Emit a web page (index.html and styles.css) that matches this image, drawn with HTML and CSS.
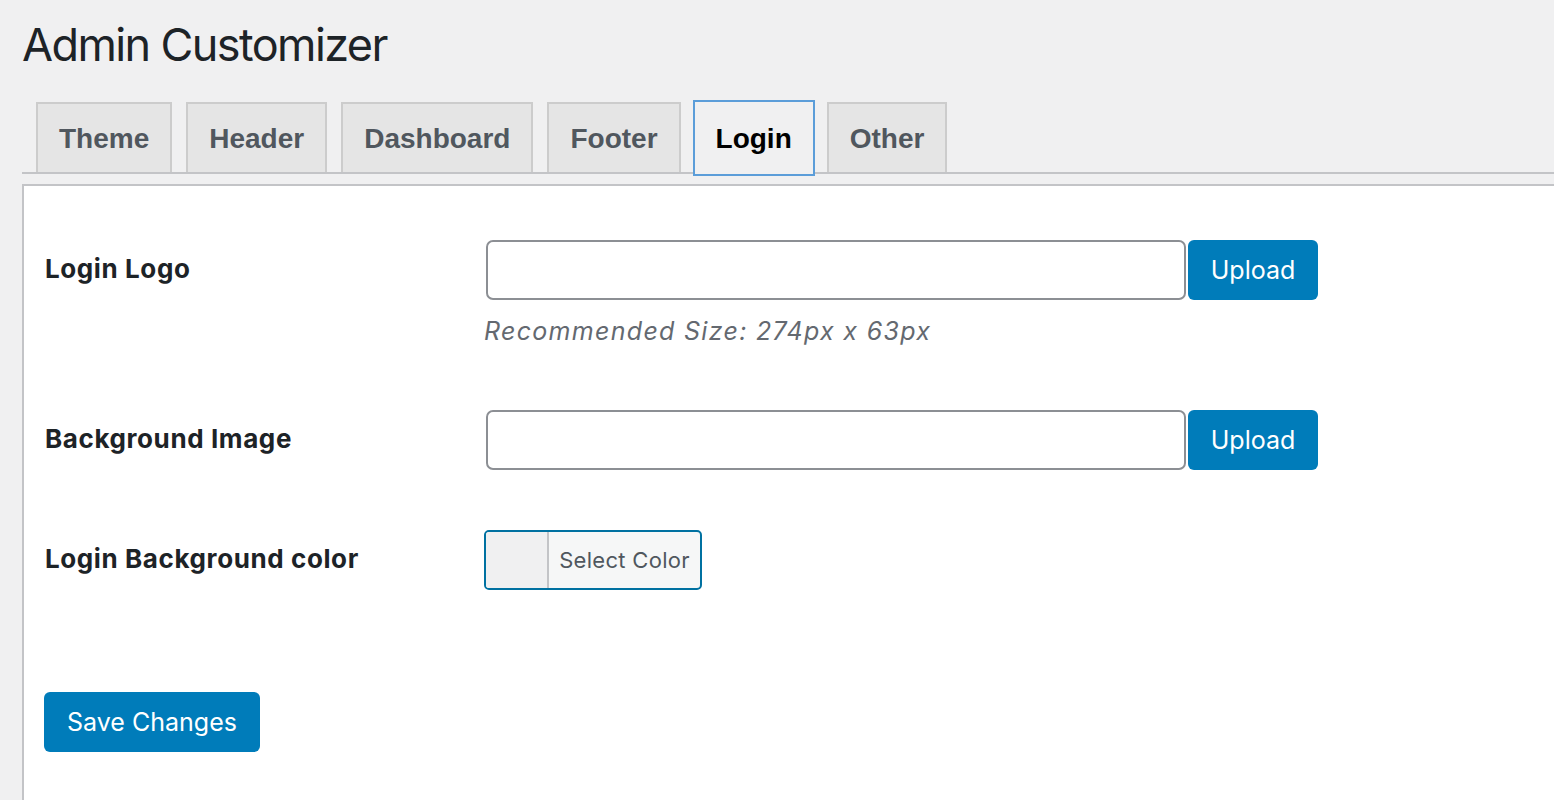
FILE: index.html
```html
<!DOCTYPE html>
<html>
<head>
<meta charset="utf-8">
<link rel="stylesheet" href="styles.css">
</head>
<body>
<div class="wrap">
  <h1 class="title">Admin Customizer</h1>
  <nav class="tabs">
    <a class="tab">Theme</a>
    <a class="tab">Header</a>
    <a class="tab">Dashboard</a>
    <a class="tab">Footer</a>
    <a class="tab active">Login</a>
    <a class="tab">Other</a>
  </nav>
  <div class="panel">
    <div class="row row-logo">
      <div class="label">Login Logo</div>
      <div class="field">
        <div class="upload">
          <input class="text" type="text">
          <button class="btn">Upload</button>
        </div>
        <p class="desc">Recommended Size: 274px x 63px</p>
      </div>
    </div>
    <div class="row row-bg">
      <div class="label">Background Image</div>
      <div class="field">
        <div class="upload">
          <input class="text" type="text">
          <button class="btn">Upload</button>
        </div>
      </div>
    </div>
    <div class="row row-color">
      <div class="label">Login Background color</div>
      <div class="field">
        <button class="color-btn"><span class="swatch"></span><span class="color-text">Select Color</span></button>
      </div>
    </div>
    <div class="submit">
      <button class="btn save">Save Changes</button>
    </div>
  </div>
</div>
</body>
</html>
```
FILE: styles.css
```css
html, body {
  margin: 0;
  padding: 0;
  background: #f0f0f1;
  font-family: Inter, "Noto Sans", sans-serif;
  color: #1d2327;
}
.wrap {
  padding-left: 22px;
  padding-top: 14px;
}
.title {
  margin: 0;
  font-size: 45px;
  font-weight: 400;
  line-height: 62px;
  letter-spacing: -1.6px;
  color: #1d2327;
}
.tabs {
  display: flex;
  align-items: flex-end;
  margin-top: 26px;
  height: 70px;
  border-bottom: 2px solid #c3c4c7;
}
.tab {
  box-sizing: border-box;
  height: 70px;
  margin-left: 14px;
  padding: 0 21px;
  background: #e5e5e5;
  border: 2px solid #cccccc;
  border-bottom: none;
  font-family: "Liberation Sans", Arial, sans-serif;
  font-weight: 700;
  font-size: 28px;
  line-height: 70px;
  color: #50575e;
  display: block;
}
.tab.active {
  height: 76px;
  margin-bottom: -4px;
  margin-left: 12px;
  border: 2px solid #5b9dd9;
  background: #f0f0f1;
  color: #000;
  line-height: 74px;
  padding: 0 21px;
}
.tab.active + .tab {
  margin-left: 12px;
}
.panel {
  margin-top: 10px;
  background: #fff;
  border-top: 2px solid #c3c4c7;
  border-left: 2px solid #c3c4c7;
  padding: 54px 21px 48px 20px;
}
.row {
  display: flex;
  align-items: flex-start;
}
.label {
  width: 440px;
  flex: none;
  padding-left: 1px;
  box-sizing: border-box;
  font-weight: 700;
  font-size: 26px;
  letter-spacing: 0.6px;
  line-height: 58px;
  color: #1d2327;
}
.field {
  flex: none;
}
.upload {
  display: flex;
  gap: 2px;
  padding-left: 2px;
}
.text {
  box-sizing: border-box;
  width: 700px;
  height: 60px;
  border: 2px solid #8c8f94;
  border-radius: 7px;
  background: #fff;
  margin: 0;
}
.btn {
  box-sizing: border-box;
  height: 60px;
  padding: 0 22px;
  border: none;
  border-radius: 6px;
  background: #007cba;
  color: #fff;
  font-family: Inter, "Noto Sans", sans-serif;
  font-size: 25px;
  margin: 0;
}
.upload .btn {
  width: 130px;
}
.desc {
  margin: 14px 0 0 0;
  font-style: italic;
  font-size: 25px;
  letter-spacing: 1.3px;
  line-height: 34px;
  color: #646970;
}
.row-bg {
  margin-top: 62px;
}
.row-color {
  margin-top: 60px;
}
.color-btn {
  box-sizing: border-box;
  display: flex;
  align-items: stretch;
  height: 60px;
  width: 218px;
  padding: 0;
  margin: 0;
  border: 2px solid #0071a1;
  border-radius: 5px;
  background: #f6f7f7;
  overflow: hidden;
  font-family: Inter, "Noto Sans", sans-serif;
}
.swatch {
  width: 61px;
  border-right: 2px solid #c3c4c7;
  background: #f0f0f1;
}
.color-text {
  flex: 1;
  font-size: 22px;
  letter-spacing: 0.3px;
  line-height: 56px;
  color: #50575e;
  text-align: center;
}
.submit {
  margin-top: 102px;
}
.save {
  width: 216px;
}
```
